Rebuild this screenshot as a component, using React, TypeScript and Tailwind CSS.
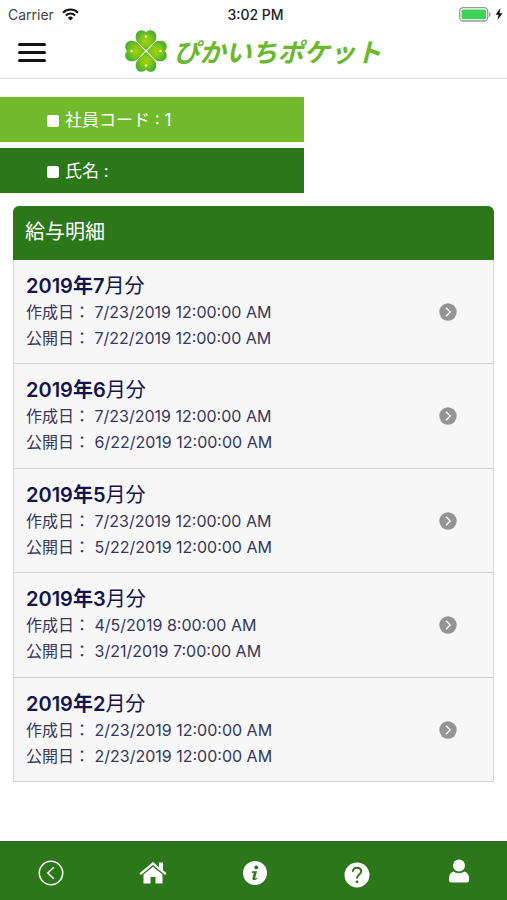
import type { ReactNode } from "react";

const PAYSLIPS = [
  { id: 1, year: 2019, month: 7, created: "7/23/2019 12:00:00 AM", published: "7/22/2019 12:00:00 AM" },
  { id: 2, year: 2019, month: 6, created: "7/23/2019 12:00:00 AM", published: "6/22/2019 12:00:00 AM" },
  { id: 3, year: 2019, month: 5, created: "7/23/2019 12:00:00 AM", published: "5/22/2019 12:00:00 AM" },
  { id: 4, year: 2019, month: 3, created: "4/5/2019 8:00:00 AM", published: "3/21/2019 7:00:00 AM" },
  { id: 5, year: 2019, month: 2, created: "2/23/2019 12:00:00 AM", published: "2/23/2019 12:00:00 AM" },
];

const LEAF = "M0 -0.8 L-8 -8.4 C-12.200 -12.500 -10.500 -20.600 -4.800 -20.800 C-2.600 -20.900 -1 -20 0 -18.800 C1 -20 2.600 -20.900 4.800 -20.800 C10.500 -20.600 12.200 -12.500 8 -8.400Z";

function StatusBar() {
  return (
    <div className="grid grid-cols-3 items-center h-7 pl-2 pr-1 text-[14px] text-[#222]">
      <div className="flex items-center gap-2">
        <span className="text-[#444]">Carrier</span>
        <svg width="17" height="13" viewBox="0 0 17 13" fill="none" stroke="#111" strokeWidth="2">
          <path d="M1 4.7a10.6 10.6 0 0 1 15 0" />
          <path d="M3.8 7.5a6.7 6.7 0 0 1 9.4 0" />
          <path d="M8.500 12.500 5.900 9.900a3.700 3.700 0 0 1 5.200 0z" fill="#111" stroke="none" />
        </svg>
      </div>
      <span className="text-center font-medium">3:02 PM</span>
      <div className="flex items-center justify-end gap-1">
        <svg width="32" height="15" viewBox="0 0 32 15">
          <rect x="0.700" y="0.700" width="28" height="13.300" rx="3.500" fill="#fff" stroke="#999" strokeWidth="1.300" />
          <rect x="2.500" y="2.500" width="24.500" height="9.700" rx="1.500" fill="#3fd158" />
          <path d="M30 5v5c2-.8 2-4.200 0-5z" fill="#999" />
        </svg>
        <svg width="8" height="12" viewBox="0 0 8 12" fill="#111"><path d="M5.500 0 .5 6.700h3L2.500 12l5-6.800h-3z" /></svg>
      </div>
    </div>
  );
}

function Clover() {
  return (
    <svg width="42" height="42" viewBox="-21 -21 42 42">
      <defs>
        <radialGradient id="leaf" gradientUnits="userSpaceOnUse" cx="0" cy="-10" r="12">
          <stop offset="0" stopColor="#a6d20c" />
          <stop offset="0.500" stopColor="#7cc31d" />
          <stop offset="1" stopColor="#3eae2e" />
        </radialGradient>
      </defs>
      {[0, 90, 180, 270].map((angle) => (
        <g key={angle} transform={`rotate(${angle})`}>
          <path d={LEAF} fill="url(#leaf)" />
          <circle cx="0" cy="-14.500" r="1.300" fill="#e8f5a8" />
        </g>
      ))}
    </svg>
  );
}

function InfoBar({ children, className }: { children: ReactNode; className: string }) {
  return (
    <div className={`flex items-center gap-1.5 w-3/5 h-[45px] pt-0.5 pl-[47px] text-[17px] text-white ${className}`}>
      <span className="w-3 h-3 rounded-xs bg-white" />
      <span>{children}</span>
    </div>
  );
}

function TabButton({ label, children }: { label: string; children: ReactNode }) {
  return (
    <button type="button" aria-label={label} className="flex items-center justify-center w-7 h-full cursor-pointer">
      {children}
    </button>
  );
}

export default function App() {
  return (
    <div className="min-h-screen flex flex-col bg-white font-['Inter','Noto_Sans_CJK_JP',sans-serif]">
      <StatusBar />

      <header className="relative flex items-center justify-center h-[51px] pb-1 border-b border-[#dcdcdc]">
        <button type="button" aria-label="メニュー" className="absolute left-[18px] top-[14px] cursor-pointer">
          <svg width="28" height="21" viewBox="0 0 28 21" stroke="#111" strokeWidth="3" strokeLinecap="round">
            <path d="M1.500 2.500h25M1.500 10.500h25M1.500 18.500h25" />
          </svg>
        </button>
        <a href="#" className="flex items-center gap-1.5">
          <Clover />
          <span className="pt-1 text-[26px] leading-10 font-bold italic text-[#6ab82b]">ぴかいちポケット</span>
        </a>
      </header>

      <main className="flex-1">
        <section className="flex flex-col gap-1.5 pt-[18px]">
          <InfoBar className="bg-[#70ba2b]">社員コード : 1</InfoBar>
          <InfoBar className="bg-[#2c7719]">氏名 :</InfoBar>
        </section>

        <section className="mx-[13px] mt-[13px]">
          <h1 className="h-[54px] px-3 pt-3 rounded-t-md bg-[#2c7719] text-[20px] leading-7 text-white">給与明細</h1>
          <ul className="border-x border-[#d8d8d8] bg-[#f7f7f7]">
            {PAYSLIPS.map((slip) => (
              <li key={slip.id} className="pb-3 even:pb-[13px] border-b border-[#d0d0d0]">
                <a href="#" className="flex items-center justify-between pt-[13px] pl-3 pr-9 text-[#35365a]">
                  <div>
                    <h2 className="text-[20px] leading-[26px] text-[#14144b]">
                      <span className="font-semibold">{slip.year}年{slip.month}</span>月分
                    </h2>
                    <p className="text-[16px] leading-[26px]">作成日： {slip.created}</p>
                    <p className="text-[16px] leading-[26px]">公開日： {slip.published}</p>
                  </div>
                  <svg width="18" height="18" viewBox="0 0 18 18" fill="none">
                    <circle cx="9" cy="9" r="8.700" fill="#949494" />
                    <path d="m7 4.800 4.200 4.200L7 13.200" stroke="#fff" strokeWidth="1.400" />
                  </svg>
                </a>
              </li>
            ))}
          </ul>
        </section>
      </main>

      <nav className="sticky bottom-0 flex items-center justify-between h-[59px] pt-1 pl-[37px] pr-[34px] border-t border-[#3d5c35] bg-[#2c7719]">
        <TabButton label="戻る">
          <svg width="26" height="26" viewBox="0 0 26 26" fill="none" stroke="#fff" strokeWidth="1.500">
            <circle cx="13" cy="13" r="11.700" />
            <path d="m15.800 7.200-6 5.800 6 5.800" />
          </svg>
        </TabButton>
        <TabButton label="ホーム">
          <svg width="28" height="24" viewBox="0 0 28 24" fill="#fff">
            <path d="M14 1 .5 12.300l1.400 1.700L14 4l12.100 10 1.400-1.700L24 9.300V1.500h-4v4.400z" />
            <path d="M14 5.700 4.500 13.600V22.500H11.500V16h5v6.500h7V13.600z" />
          </svg>
        </TabButton>
        <TabButton label="お知らせ">
          <svg width="24" height="24" viewBox="0 0 24 24">
            <circle cx="12" cy="12" r="12" fill="#fff" />
            <circle cx="13.300" cy="6.400" r="1.900" fill="#2c7719" />
            <path d="M9 10.300h5l-1.800 6.800c-.2.800.6.500 1.700-.5l.6.600c-1.500 1.800-5.500 3-5-.2l1.300-5.200-2 .1z" fill="#2c7719" />
          </svg>
        </TabButton>
        <TabButton label="ヘルプ">
          <svg width="26" height="26" viewBox="0 0 26 26" fill="none" className="mt-1">
            <circle cx="13" cy="13" r="12.500" fill="#fff" />
            <path d="M8.900 9.800c0-5.400 8.300-5.300 8.300-.5 0 3.300-4.200 3.300-4.200 7.200" stroke="#2c7719" strokeWidth="2" />
            <circle cx="13" cy="19.800" r="1.400" fill="#2c7719" />
          </svg>
        </TabButton>
        <TabButton label="マイページ">
          <svg width="22" height="24" viewBox="0 0 22 24" fill="#fff" className="mb-1">
            <circle cx="11" cy="6.500" r="6" />
            <path d="M5.500 12.500c3 2.300 8 2.300 11 0 3 .8 4.500 3.500 4.500 6.500v2c0 1.700-1 2.500-2.500 2.500h-15C2 23.500 1 22.700 1 21v-2c0-3 1.500-5.700 4.500-6.500z" />
          </svg>
        </TabButton>
      </nav>
    </div>
  );
}
